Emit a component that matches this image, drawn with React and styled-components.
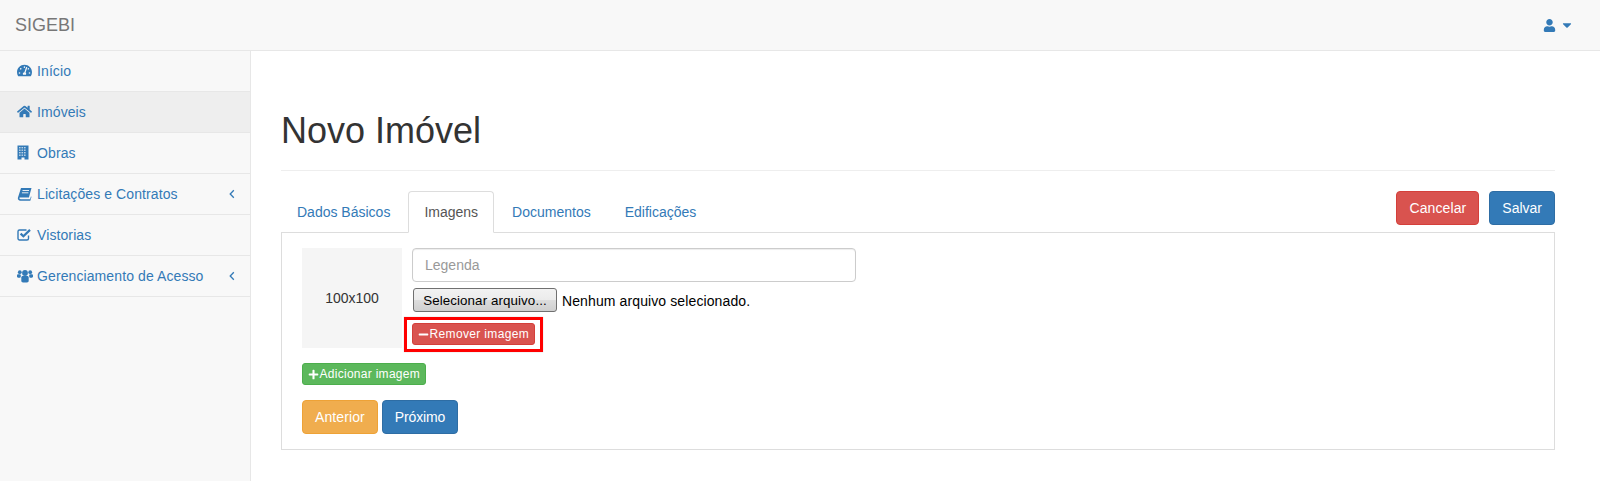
import React from 'react';
import styled, { createGlobalStyle } from 'styled-components';
import { FaTachometerAlt, FaHome, FaUser, FaCaretDown, FaPlus, FaMinus } from 'react-icons/fa';

const GlobalStyle = createGlobalStyle`
  * {
    box-sizing: border-box;
  }
  body {
    margin: 0;
    background: #fff;
    color: #333;
    font-family: "Liberation Sans", Arial, sans-serif;
    font-size: 14px;
    line-height: 20px;
  }
`;

const Navbar = styled.header`
  display: flex;
  align-items: center;
  justify-content: space-between;
  height: 51px;
  padding: 0 15px;
  background: #f8f8f8;
  border-bottom: 1px solid #e7e7e7;
`;

const Brand = styled.a`
  color: #777;
  font-size: 18px;
`;

const UserMenu = styled.a`
  display: flex;
  align-items: center;
  gap: 4px;
  margin-right: 11px;
  color: #337ab7;
`;

const Layout = styled.div`
  display: flex;
  align-items: stretch;
  min-height: 430px;
`;

const Sidebar = styled.nav`
  flex: 0 0 251px;
  background: #f8f8f8;
  border-right: 1px solid #e7e7e7;
`;

const SideItem = styled.a`
  display: flex;
  align-items: center;
  height: 41px;
  padding: 0 15px 1px 17px;
  color: #337ab7;
  letter-spacing: 0.1px;
  border-bottom: 1px solid #e7e7e7;
  background: ${(p) => (p.$active ? '#eee' : 'transparent')};
`;

const SideIcon = styled.span`
  display: flex;
  flex: 0 0 20px;
`;

const SideLabel = styled.span`
  flex: 1;
`;

const Main = styled.main`
  flex: 1;
  padding: 0 45px 0 30px;
`;

const PageHeader = styled.h1`
  margin: 0;
  height: 120px;
  padding-top: 60px;
  border-bottom: 1px solid #eee;
  font-size: 36px;
  font-weight: 500;
  line-height: 40px;
  color: #333;
`;

const TabBar = styled.div`
  display: flex;
  align-items: flex-end;
  justify-content: space-between;
  margin-top: 20px;
  height: 41px;
`;

const Tabs = styled.ul`
  display: flex;
  gap: 2px;
  list-style: none;
  margin: 0;
  padding: 0;
`;

const Tab = styled.li`
  position: relative;
  z-index: 1;
  height: 42px;
  padding: 10px 15px;
  margin-bottom: -1px;
  color: ${(p) => (p.$active ? '#555' : '#337ab7')};
  background: ${(p) => (p.$active ? '#fff' : 'transparent')};
  border: 1px solid ${(p) => (p.$active ? '#ddd' : 'transparent')};
  border-bottom-color: ${(p) => (p.$active ? '#fff' : 'transparent')};
  border-radius: 4px 4px 0 0;
`;

const Actions = styled.div`
  display: flex;
  gap: 10px;
  align-self: flex-start;
`;

const Button = styled.button`
  height: 34px;
  padding: 6px 12px;
  border: 1px solid ${(p) => p.$border};
  border-radius: 4px;
  background: ${(p) => p.$bg};
  color: #fff;
  font: inherit;
  letter-spacing: ${(p) => p.$spacing || '0.1px'};
`;

const SmallButton = styled.button`
  display: inline-flex;
  align-items: center;
  gap: 0.5px;
  height: 22px;
  padding: 1px 5px;
  border: 1px solid ${(p) => p.$border};
  border-radius: 3px;
  background: ${(p) => p.$bg};
  color: #fff;
  font: inherit;
  font-size: 12px;
  line-height: 18px;
  letter-spacing: ${(p) => p.$spacing || '0.28px'};
`;

const TabPanel = styled.section`
  height: 218px;
  padding: 15px 20px;
  border: 1px solid #ddd;
`;

const ImageRow = styled.div`
  display: flex;
  gap: 10px;
`;

const Thumb = styled.div`
  display: flex;
  align-items: center;
  justify-content: center;
  width: 100px;
  height: 100px;
  background: #f5f5f5;
`;

const ImageFields = styled.div`
  display: flex;
  flex-direction: column;
  align-items: flex-start;
  width: 444px;
`;

const CaptionInput = styled.input`
  width: 100%;
  height: 34px;
  padding: 6px 12px;
  border: 1px solid #ccc;
  border-radius: 4px;
  box-shadow: inset 0 1px 1px rgba(0, 0, 0, 0.075);
  color: #555;
  font: inherit;
  &::placeholder {
    color: #999;
    opacity: 1;
  }
`;

const FileRow = styled.div`
  display: flex;
  align-items: center;
  gap: 5px;
  margin-top: 6px;
  margin-left: 1px;
  height: 24px;
`;

const FileButton = styled.button`
  width: 144px;
  height: 24px;
  padding: 1px 0 0;
  border: 1px solid #707070;
  border-radius: 3px;
  background: linear-gradient(#f2f2f2, #ebebeb 50%, #ddd 50%, #cfcfcf);
  color: #000;
  font: inherit;
  font-size: 13.33px;
  letter-spacing: 0.1px;
`;

const FileName = styled.span`
  padding-top: 2px;
  color: #000;
  letter-spacing: 0.11px;
`;

const Highlight = styled.div`
  position: relative;
  margin-top: 11px;
  &::after {
    content: '';
    position: absolute;
    inset: -6px -8px -7px -8px;
    border: 3px solid #f00;
    box-shadow: 0 0 1px #bbb;
    pointer-events: none;
  }
`;

const AddRow = styled.div`
  margin-top: 15px;
`;

const PagerRow = styled.div`
  display: flex;
  gap: 4px;
  margin-top: 15px;
`;

// Font Awesome 4 glyphs the icon packages no longer carry
const BuildingIcon = () => (
  <svg width="12" height="15" viewBox="0 0 12 15" fill="currentColor">
    <path d="M0.5 0.5h11v14h-4v-2h-3v2h-4z" />
    {[2, 4.5, 7].map((x) =>
      [2, 4.5, 7, 9.5].map((y) => (
        <rect key={`${x}-${y}`} x={x} y={y} width="1.6" height="1.4" fill="#bcd3e6" />
      ))
    )}
  </svg>
);

const BookIcon = () => (
  <svg width="15" height="14" viewBox="0 0 15 14" fill="currentColor">
    <path d="M4 1h10.5l-2.6 9.6H3.4c-.9 0-1.2.5-.9 1s.7.6 1.2.6h9.4l.8-2.8.6.4-1.2 4H3.4C1.6 13.8.5 12.400.9 10.800z" />
    <path d="M5.500 3.500h6.500M4.900 5.800h6.500" stroke="#f8f8f8" strokeWidth="0.9" fill="none" />
  </svg>
);

const CheckSquareIcon = () => (
  <svg width="15" height="13" viewBox="0 0 15 13" fill="none" stroke="currentColor">
    <path d="M11.500 7.500v3a1.500 1.500 0 0 1-1.500 1.500H2.500A1.500 1.500 0 0 1 1 10.500V3.500A1.500 1.500 0 0 1 2.500 2h7" strokeWidth="1.400" />
    <path d="M3.600 5.600l2.800 2.700 6.600-6.400" strokeWidth="2.200" />
  </svg>
);

const UsersIcon = () => (
  <svg width="16" height="14" viewBox="0 0 16 14" fill="currentColor">
    <circle cx="8" cy="4" r="2.900" />
    <circle cx="2.800" cy="3.200" r="1.900" />
    <circle cx="13.200" cy="3.200" r="1.900" />
    <path d="M4.300 8.500c0-1 .8-1.500 1.500-1.500h4.400c.7 0 1.500.5 1.500 1.500v3.300c0 1-.8 1.700-1.700 1.700H6c-.9 0-1.700-.7-1.700-1.700z" />
    <path d="M0 6.500c0-.8.600-1.300 1.300-1.300h2.200c-.1 1 .3 1.400.7 1.700-.6.400-.9 1-.9 1.900H1.200C.5 8.800 0 8.300 0 7.600z" />
    <path d="M16 6.500c0-.8-.6-1.300-1.300-1.300h-2.200c.1 1-.3 1.400-.7 1.700.6.400.9 1 .9 1.900h2.100c.7 0 1.200-.5 1.200-1.200z" />
  </svg>
);

const AngleLeftIcon = () => (
  <svg width="6" height="10" viewBox="0 0 6 10" fill="none" stroke="currentColor" strokeWidth="1.300">
    <path d="M4.800 1.200L1.200 5l3.600 3.800" />
  </svg>
);

const navItems = [
  { label: 'Início', icon: <FaTachometerAlt size={15} /> },
  { label: 'Imóveis', icon: <FaHome size={15} />, active: true },
  { label: 'Obras', icon: <BuildingIcon /> },
  { label: 'Licitações e Contratos', icon: <BookIcon />, sub: true },
  { label: 'Vistorias', icon: <CheckSquareIcon /> },
  { label: 'Gerenciamento de Acesso', icon: <UsersIcon />, sub: true },
];

const tabs = ['Dados Básicos', 'Imagens', 'Documentos', 'Edificações'];

function App() {
  return (
    <>
      <GlobalStyle />
      <Navbar>
        <Brand>SIGEBI</Brand>
        <UserMenu>
          <FaUser size={13} />
          <FaCaretDown size={14} />
        </UserMenu>
      </Navbar>
      <Layout>
        <Sidebar>
          {navItems.map((item) => (
            <SideItem key={item.label} $active={item.active}>
              <SideIcon>{item.icon}</SideIcon>
              <SideLabel>{item.label}</SideLabel>
              {item.sub && <AngleLeftIcon />}
            </SideItem>
          ))}
        </Sidebar>
        <Main>
          <PageHeader>Novo Imóvel</PageHeader>
          <TabBar>
            <Tabs>
              {tabs.map((tab) => (
                <Tab key={tab} $active={tab === 'Imagens'}>
                  {tab}
                </Tab>
              ))}
            </Tabs>
            <Actions>
              <Button $bg="#d9534f" $border="#d43f3a">
                Cancelar
              </Button>
              <Button $bg="#337ab7" $border="#2e6da4" $spacing="0">
                Salvar
              </Button>
            </Actions>
          </TabBar>
          <TabPanel>
            <ImageRow>
              <Thumb>100x100</Thumb>
              <ImageFields>
                <CaptionInput placeholder="Legenda" />
                <FileRow>
                  <FileButton>Selecionar arquivo...</FileButton>
                  <FileName>Nenhum arquivo selecionado.</FileName>
                </FileRow>
                <Highlight>
                  <SmallButton $bg="#d9534f" $border="#d43f3a" $spacing="0.35px">
                    <FaMinus size={11} />
                    Remover imagem
                  </SmallButton>
                </Highlight>
              </ImageFields>
            </ImageRow>
            <AddRow>
              <SmallButton $bg="#5cb85c" $border="#4cae4c">
                <FaPlus size={11} />
                Adicionar imagem
              </SmallButton>
            </AddRow>
            <PagerRow>
              <Button $bg="#f0ad4e" $border="#eea236">
                Anterior
              </Button>
              <Button $bg="#337ab7" $border="#2e6da4" $spacing="-0.15px">
                Próximo
              </Button>
            </PagerRow>
          </TabPanel>
        </Main>
      </Layout>
    </>
  );
}

export default App;
